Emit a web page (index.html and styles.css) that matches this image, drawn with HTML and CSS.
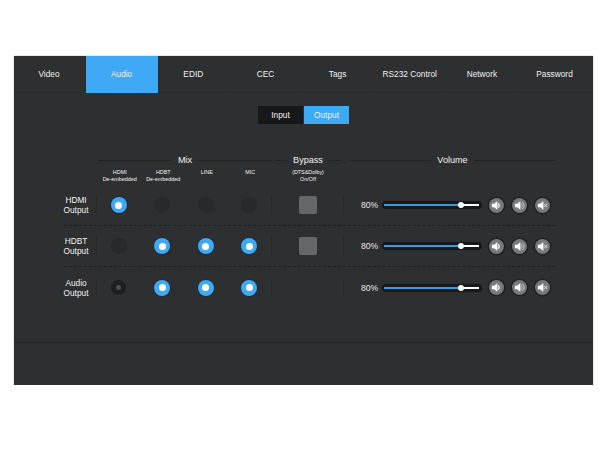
FILE: index.html
```html
<!DOCTYPE html>
<html lang="en">
<head>
<meta charset="utf-8">
<title>Audio</title>
<link rel="stylesheet" href="styles.css">
</head>
<body>
<svg class="defs" width="0" height="0" aria-hidden="true">
  <symbol id="spk" viewBox="0 0 18 18"><path d="M3.5 6.8h2.8L10 4v10L6.3 11.2H3.5z" fill="#fff"/></symbol>
</svg>
<main class="panel">
  <nav class="tabs">
    <a class="tab">Video</a><a class="tab active">Audio</a><a class="tab">EDID</a><a class="tab">CEC</a><a class="tab">Tags</a><a class="tab">RS232 Control</a><a class="tab">Network</a><a class="tab">Password</a>
  </nav>
  <section class="content">
    <div class="switch"><span class="sw">Input</span><span class="sw on">Output</span></div>
    <div class="matrix">
      <div class="head">
        <div class="head-spacer"></div>
        <div class="group mix"><span>Mix</span></div>
        <div class="group bypass"><span>Bypass</span></div>
        <div class="group volume"><span>Volume</span></div>
      </div>
      <div class="subhead">
        <div class="head-spacer"></div>
        <div class="sub">HDMI<br>De-embedded</div>
        <div class="sub">HDBT<br>De-embedded</div>
        <div class="sub">LINE</div>
        <div class="sub">MIC</div>
        <div class="sub sub-bypass">(DTS&amp;Dolby)<br>On/Off</div>
      </div>

      <div class="row">
        <div class="label">HDMI<br>Output</div>
        <div class="mixcells">
          <div class="cell"><i class="radio sel"></i></div><div class="cell"><i class="radio"></i></div><div class="cell"><i class="radio"></i></div><div class="cell"><i class="radio"></i></div>
        </div>
        <div class="bp"><i class="square"></i></div>
        <div class="vol">
          <span class="pct">80%</span>
          <div class="slider"><div class="fill"></div><div class="thumb"></div></div>
          <button class="vbtn"><svg width="15" height="15" viewBox="0 0 18 18"><use href="#spk"/><path d="M11 6.6a3 3 0 0 1 0 4.8" stroke="#fff" stroke-width="1.4" fill="none"/></svg></button>
          <button class="vbtn"><svg width="15" height="15" viewBox="0 0 18 18"><use href="#spk"/><path d="M11 6.6a3 3 0 0 1 0 4.8M12.5 4.8a5.4 5.4 0 0 1 0 8.4" stroke="#c4c4c6" stroke-width="1.1" fill="none"/></svg></button>
          <button class="vbtn"><svg width="15" height="15" viewBox="0 0 18 18"><use href="#spk"/><path d="M11.2 7.2l3.4 3.6M14.6 7.2l-3.4 3.6" stroke="#e4e4e4" stroke-width="1" fill="none"/></svg></button>
        </div>
      </div>

      <div class="row">
        <div class="label">HDBT<br>Output</div>
        <div class="mixcells">
          <div class="cell"><i class="radio"></i></div><div class="cell"><i class="radio sel"></i></div><div class="cell"><i class="radio sel"></i></div><div class="cell"><i class="radio sel"></i></div>
        </div>
        <div class="bp"><i class="square"></i></div>
        <div class="vol">
          <span class="pct">80%</span>
          <div class="slider"><div class="fill"></div><div class="thumb"></div></div>
          <button class="vbtn"><svg width="15" height="15" viewBox="0 0 18 18"><use href="#spk"/><path d="M11 6.6a3 3 0 0 1 0 4.8" stroke="#fff" stroke-width="1.4" fill="none"/></svg></button>
          <button class="vbtn"><svg width="15" height="15" viewBox="0 0 18 18"><use href="#spk"/><path d="M11 6.6a3 3 0 0 1 0 4.8M12.5 4.8a5.4 5.4 0 0 1 0 8.4" stroke="#c4c4c6" stroke-width="1.1" fill="none"/></svg></button>
          <button class="vbtn"><svg width="15" height="15" viewBox="0 0 18 18"><use href="#spk"/><path d="M11.2 7.2l3.4 3.6M14.6 7.2l-3.4 3.6" stroke="#e4e4e4" stroke-width="1" fill="none"/></svg></button>
        </div>
      </div>

      <div class="row last">
        <div class="label">Audio<br>Output</div>
        <div class="mixcells">
          <div class="cell"><i class="radio dis"></i></div><div class="cell"><i class="radio sel"></i></div><div class="cell"><i class="radio sel"></i></div><div class="cell"><i class="radio sel"></i></div>
        </div>
        <div class="bp"></div>
        <div class="vol">
          <span class="pct">80%</span>
          <div class="slider"><div class="fill"></div><div class="thumb"></div></div>
          <button class="vbtn"><svg width="15" height="15" viewBox="0 0 18 18"><use href="#spk"/><path d="M11 6.6a3 3 0 0 1 0 4.8" stroke="#fff" stroke-width="1.4" fill="none"/></svg></button>
          <button class="vbtn"><svg width="15" height="15" viewBox="0 0 18 18"><use href="#spk"/><path d="M11 6.6a3 3 0 0 1 0 4.8M12.5 4.8a5.4 5.4 0 0 1 0 8.4" stroke="#c4c4c6" stroke-width="1.1" fill="none"/></svg></button>
          <button class="vbtn"><svg width="15" height="15" viewBox="0 0 18 18"><use href="#spk"/><path d="M11.2 7.2l3.4 3.6M14.6 7.2l-3.4 3.6" stroke="#e4e4e4" stroke-width="1" fill="none"/></svg></button>
        </div>
      </div>
    </div>
  </section>
  <footer class="foot"></footer>
</main>
</body>
</html>
```

FILE: styles.css
```css
* { box-sizing: border-box; }
html, body { margin: 0; background: #fff; }
body { padding: 56px 17px 0 14px; font-family: "Liberation Sans", Arial, sans-serif; color: #f2f2f2; }
.defs { position: absolute; }
.panel { height: 329px; background: #2e2f31; display: flex; flex-direction: column; box-shadow: 0 0 1px #777; }

.tabs { display: grid; grid-template-columns: repeat(8, 1fr); padding-right: 1.8px; height: 37px; border-bottom: 1px solid #2a2b2d; }
.tab { display: flex; align-items: center; justify-content: center; padding: 0 1.2px 1px 0; font-size: 8.3px; border-right: 1px solid #2a2b2d; color: #f0f0f0; }
.tab:last-child { border-right: 0; }
.tab.active { background: #3fa9f5; border-right: 0; margin-right: 0.8px; padding-right: 0.4px; height: 37px; }

.content { flex: 1; display: flex; flex-direction: column; }
.switch { align-self: center; display: flex; gap: 1px; margin-top: 13px; height: 18px; }
.sw { width: 45px; display: flex; align-items: center; justify-content: center; padding-bottom: 1px; font-size: 8.3px; background: #17181a; }
.sw.on { background: #3fa9f5; }

.matrix { margin: 31px 0 0 50px; width: 491px; }
.head { display: flex; height: 10px; align-items: center; }
.head-spacer { width: 34px; flex: none; }
.group { display: flex; align-items: center; gap: 6px; font-size: 9.1px; line-height: 10px; }
.group::before, .group::after { content: ""; flex: 1; height: 1px; background: #222325; }
.mix { width: 174px; }
.bypass { width: 72px; padding: 0 3px; }
.volume { flex: 1; padding-left: 6px; }
.subhead { display: flex; height: 20px; padding-top: 4px; }
.sub { width: 43.5px; flex: none; text-align: center; font-size: 5.4px; line-height: 6.5px; white-space: nowrap; }
.sub-bypass { width: 72px; }

.row { display: flex; align-items: center; height: 41px; border-bottom: 1px dashed #1f2022; }
.row.last { border-bottom: 0; }
.label { width: 32px; flex: none; padding-right: 8px; font-size: 8.3px; line-height: 10px; white-space: nowrap; display: flex; justify-content: center; text-align: center; }
.mixcells { display: flex; width: 176px; flex: none; height: 20px; border-left: 1px solid #29292b; border-right: 1px solid #29292b; }
.cell { width: 43.5px; display: flex; align-items: center; justify-content: center; }
.radio { display: flex; align-items: center; justify-content: center; width: 16px; height: 16px; border-radius: 50%; background: #28292b; }
.radio.sel { background: #3fa9f5; box-shadow: 0 0 0 1px #1e2c38; }
.radio.sel::after { content: ""; width: 7px; height: 7px; border-radius: 50%; background: #fff; }
.radio.dis { width: 15px; height: 15px; background: #1e1f21; }
.radio.dis::after { content: ""; width: 5px; height: 5px; border-radius: 50%; background: #4d4e50; }
.bp { width: 72px; height: 20px; display: flex; align-items: center; justify-content: center; flex: none; border-right: 1px solid #29292b; }
.square { width: 18px; height: 18px; border-radius: 2px; background: #666769; }

.vol { flex: 1; display: flex; align-items: center; height: 20px; padding-left: 17px; }
.pct { width: 21px; font-size: 8.6px; color: #e8e8e8; white-space: nowrap; }
.slider { position: relative; width: 100px; height: 8px; border-radius: 4px; background: #17181a; margin-right: 6.5px; }
.slider::before { content: ""; position: absolute; left: 2px; right: 3px; top: 3px; height: 2px; background: #fff; }
.fill { position: absolute; left: 2px; width: 77px; top: 3px; height: 2px; background: #3a9be0; }
.thumb { position: absolute; left: 76px; top: 1px; width: 6px; height: 6px; border-radius: 50%; background: #fff; }
.vbtn { width: 15px; height: 15px; padding: 0; border: 0; border-radius: 50%; background: radial-gradient(circle, #8b8c8f, #67686b); box-shadow: 0 0 0 1.5px #202124; margin-right: 8.4px; display: block; flex: none; }
.vbtn svg { display: block; }

.foot { height: 43px; border-top: 1px solid #262729; flex: none; }
```
